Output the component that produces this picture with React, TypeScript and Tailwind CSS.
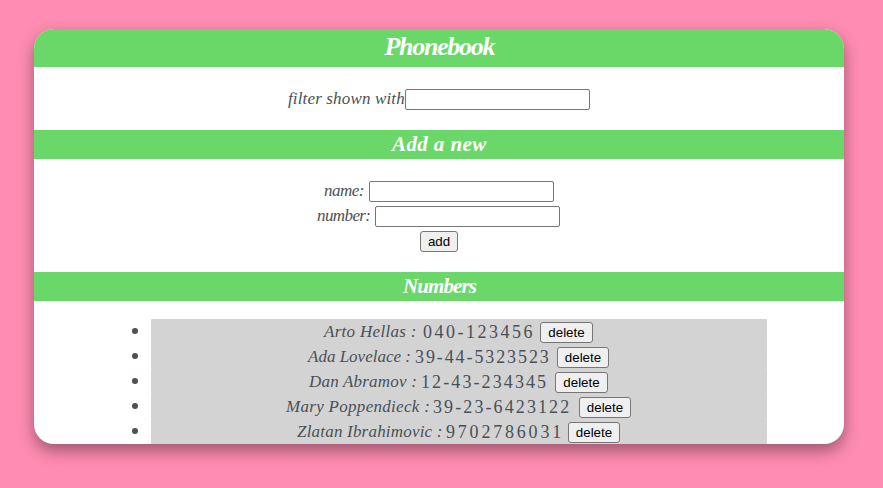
import React from "react";

type Person = {
  name: string;
  number: string;
  nameClass: string;
  numberClass: string;
  buttonClass: string;
};

const people: Person[] = [
  { name: "Arto Hellas", number: "040-123456", nameClass: "w-[99px] tracking-[0.3px]", numberClass: "w-[116px] tracking-[2.5px]", buttonClass: "w-[53px]" },
  { name: "Ada Lovelace", number: "39-44-5323523", nameClass: "w-[107px] tracking-[0px]", numberClass: "w-[141px] tracking-[1.9px]", buttonClass: "w-[52px]" },
  { name: "Dan Abramov", number: "12-43-234345", nameClass: "w-[112px] tracking-[0.2px]", numberClass: "w-[133px] tracking-[2.1px]", buttonClass: "w-[53px]" },
  { name: "Mary Poppendieck", number: "39-23-6423122", nameClass: "w-[147px] tracking-[0.3px]", numberClass: "w-[145px] tracking-[2.1px]", buttonClass: "w-[52px]" },
  { name: "Zlatan Ibrahimovic", number: "9702786031", nameClass: "w-[149px] tracking-[0.2px]", numberClass: "w-[121px] tracking-[2.8px]", buttonClass: "w-[52px]" },
];

const script = "font-['Liberation_Serif',serif] italic whitespace-nowrap";
const field = "h-[21px] w-[185px] rounded-[2px] border border-[#767676] bg-white outline-none";
const button =
  "h-[21px] shrink-0 rounded-[3px] border border-[#767676] bg-[#efefef] text-center font-['Liberation_Sans',sans-serif] text-[13.333px] leading-[19px] text-black";

export default function App() {
  return (
    <main className="h-[488px] w-[883px] overflow-hidden bg-[#ff8cb2] pt-[29px] pl-[34px] text-[#495057]">
      <section className="h-[415px] w-[810px] overflow-hidden rounded-[20px] bg-white shadow-[0_7px_16px_0_rgba(0,0,0,0.38)]">
        <h1 className={`${script} flex h-[38px] justify-center bg-[#69d869] text-[26px] leading-[36px] font-bold text-white`}>
          <span className="w-[109px] tracking-[-1.3px]">Phonebook</span>
        </h1>
        <div className="flex h-[63px] items-start justify-center pt-[22px]">
          <label className={`${script} w-[117px] text-[17px] leading-[20px] tracking-[0.15px]`}>filter shown with</label>
          <input className={field} />
        </div>
        <h2 className={`${script} flex h-[29px] justify-center bg-[#69d869] text-[21px] leading-[28px] font-bold text-white`}>
          <span className="w-[94px] tracking-[0.4px]">Add a new</span>
        </h2>
        <form className="flex h-[113px] flex-col items-center gap-1 pt-[22px]">
          <div className="flex">
            <label className={`${script} w-[45px] text-[17px] leading-[20px] tracking-[-0.5px]`}>name:</label>
            <input className={field} />
          </div>
          <div className="flex">
            <label className={`${script} w-[57px] -indent-px text-[17px] leading-[20px] tracking-[-0.6px]`}>number:</label>
            <input className={field} />
          </div>
          <button type="button" className={`${button} w-[38px]`}>add</button>
        </form>
        <h2 className={`${script} flex h-[29px] justify-center bg-[#69d869] text-[21px] leading-[28px] font-bold text-white`}>
          <span className="w-[72px] tracking-[-0.9px]">Numbers</span>
        </h2>
        <ul className="pt-[18px] pl-[98px]">
          {people.map((p) => (
            <li key={p.name} className="flex h-[25px] items-start">
              <span className="mt-[9px] mr-[13px] size-[6px] shrink-0 rounded-full bg-[#495057]" />
              <div className="flex h-[25px] w-[616px] items-start justify-center rounded-[1px] bg-[#d3d3d3] pt-[3px]">
                <span className={`${script} -indent-px text-[17px] leading-[20px] ${p.nameClass}`}>{p.name} :</span>
                <span className={`-indent-px font-['Liberation_Serif',serif] text-[18px] leading-[20px] whitespace-nowrap ${p.numberClass}`}>{p.number}</span>
                <button type="button" className={`${button} ${p.buttonClass}`}>delete</button>
              </div>
            </li>
          ))}
        </ul>
      </section>
    </main>
  );
}
